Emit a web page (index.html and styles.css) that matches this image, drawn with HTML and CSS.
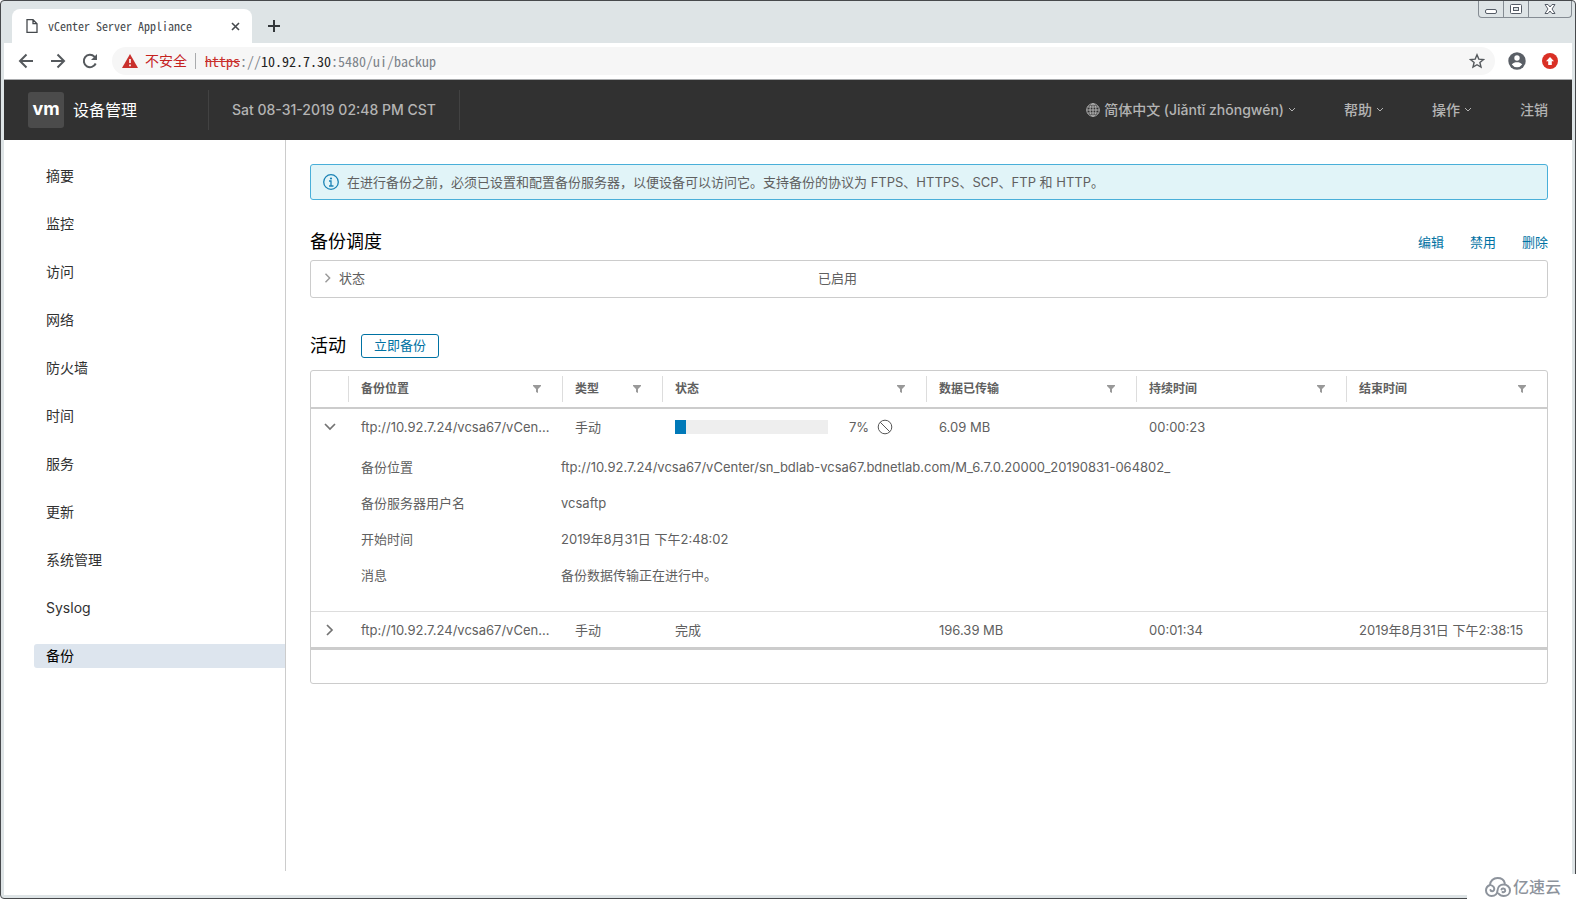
FILE: index.html
```html
<!DOCTYPE html>
<html lang="zh-CN">
<head>
<meta charset="utf-8">
<title>vCenter Server Appliance</title>
<link rel="stylesheet" href="styles.css">
</head>
<body>
<svg class="defs" aria-hidden="true">
  <symbol id="funnel" viewBox="0 0 8 8"><path d="M0 0h8v1L5 4v4L3 7V4L0 1z" fill="#999"/></symbol>
  <symbol id="down" viewBox="0 0 12 12"><path d="M1 3l5 5 5-5" fill="none" stroke="currentColor" stroke-width="1.700"/></symbol>
  <symbol id="right" viewBox="0 0 12 12"><path d="M3 1l5 5-5 5" fill="none" stroke="currentColor" stroke-width="1.700"/></symbol>
  <symbol id="caret" viewBox="0 0 8 8"><path d="M1 2l3 3 3-3" fill="none" stroke="currentColor"/></symbol>
</svg>
<div class="window">
  <div class="tabstrip">
    <div class="tab">
      <svg class="tab-icon" viewBox="0 0 12 14"><path d="M1 .7h6l4 4v8.600H1zM7 .7v4h4" fill="none" stroke="#45494d" stroke-width="1.300"/></svg>
      <span class="tab-title">vCenter Server Appliance</span>
      <button class="plain" aria-label="关闭标签页"><svg class="s9" viewBox="0 0 9 9"><path d="M1 1l7 7M8 1L1 8" stroke="#45494d" stroke-width="1.600"/></svg></button>
    </div>
    <button class="plain new-tab" aria-label="新标签页"><svg class="s12" viewBox="0 0 12 12"><path d="M6 0v12M0 6h12" stroke="#33373a" stroke-width="2"/></svg></button>
    <div class="controls">
      <button class="control" aria-label="最小化"><svg class="s14" viewBox="0 0 14 14"><rect x="1.500" y="7.500" width="11" height="4" rx="1.500" fill="#fff" stroke="#555c66"/></svg></button>
      <button class="control" aria-label="还原"><svg class="s14" viewBox="0 0 14 14"><rect x="1.500" y="2.500" width="11" height="9" rx="1" fill="#fff" stroke="#555c66"/><rect x="4.500" y="5.500" width="5" height="3" fill="#dee4e6" stroke="#555c66"/></svg></button>
      <button class="control close" aria-label="关闭"><svg class="s14" viewBox="0 0 14 14"><path d="M2 2.500h3l2 2.500 2-2.500h3L9 7l3 4.500H9L7 9l-2 2.500H2L5 7z" fill="#fff" stroke="#555c66"/></svg></button>
    </div>
  </div>

  <div class="toolbar">
    <button class="plain" aria-label="后退"><svg class="s16" viewBox="0 0 16 16"><path d="M15 8H2M8.500 1.500L2 8l6.500 6.500" fill="none" stroke="#55595d" stroke-width="2"/></svg></button>
    <button class="plain" aria-label="前进"><svg class="s16" viewBox="0 0 16 16"><path d="M1 8h13M7.500 1.500L14 8l-6.500 6.500" fill="none" stroke="#55595d" stroke-width="2"/></svg></button>
    <button class="plain" aria-label="重新加载"><svg class="s16" viewBox="0 0 16 16"><path d="M13.700 10.500A6.200 6.200 0 1 1 12.400 3.600L14 5.200" fill="none" stroke="#55595d" stroke-width="2"/><path d="M15 1v6H9z" fill="#55595d"/></svg></button>
    <div class="omnibox">
      <svg class="warn" viewBox="0 0 16 14"><path d="M8 0l8 14H0z" fill="#c9302c"/><path d="M8 5v4M8 10.500v1.800" stroke="#fff" stroke-width="1.600"/></svg>
      <span class="insecure">不安全</span>
      <div class="url" role="textbox" contenteditable="true" spellcheck="false" aria-label="地址"><s class="scheme">https</s>://<span class="host">10.92.7.30</span>:5480/ui/backup</div>
      <button class="plain" aria-label="收藏"><svg class="s16" viewBox="0 0 16 16"><path d="M8 1.800l1.800 4.300 4.700.4-3.600 3 1.100 4.600L8 11.700l-4 2.400 1.100-4.600-3.600-3 4.700-.4z" fill="none" stroke="#55595d" stroke-width="1.400"/></svg></button>
    </div>
    <button class="plain" aria-label="用户"><svg class="s18" viewBox="0 0 18 18"><circle cx="9" cy="9" r="8.700" fill="#5a5f66"/><circle cx="9" cy="6" r="2.700" fill="#fff"/><path d="M3.800 12.600C5 10.700 7 10.300 9 10.300s4 .4 5.200 2.300A6.300 6.300 0 0 1 9 15.300a6.300 6.300 0 0 1-5.200-2.700z" fill="#fff"/></svg></button>
    <button class="plain" aria-label="更新浏览器"><svg class="s16" viewBox="0 0 16 16"><circle cx="8" cy="8" r="8" fill="#d93025"/><path d="M8 4l4 4.300H9.800V12H6.200V8.300H4z" fill="#fff"/></svg></button>
  </div>

  <header class="header">
    <div class="brand"><span class="logo">vm</span><span class="product">设备管理</span></div>
    <div class="clock">Sat 08-31-2019 02:48 PM CST</div>
    <nav class="menu">
      <button class="menu-item"><svg class="s14" viewBox="0 0 14 14"><g fill="none" stroke="currentColor"><circle cx="7" cy="7" r="6.300"/><ellipse cx="7" cy="7" rx="3" ry="6.300"/><path d="M7 1v12M1 7h12M1.800 4h10.400M1.800 10h10.400"/></g></svg><span>简体中文 (Jiǎntǐ zhōngwén)</span><svg class="s8"><use href="#caret"/></svg></button>
      <button class="menu-item"><span>帮助</span><svg class="s8"><use href="#caret"/></svg></button>
      <button class="menu-item"><span>操作</span><svg class="s8"><use href="#caret"/></svg></button>
      <button class="menu-item"><span>注销</span></button>
    </nav>
  </header>

  <div class="body">
    <nav class="sidebar">
      <a class="nav-link" href="#">摘要</a>
      <a class="nav-link" href="#">监控</a>
      <a class="nav-link" href="#">访问</a>
      <a class="nav-link" href="#">网络</a>
      <a class="nav-link" href="#">防火墙</a>
      <a class="nav-link" href="#">时间</a>
      <a class="nav-link" href="#">服务</a>
      <a class="nav-link" href="#">更新</a>
      <a class="nav-link" href="#">系统管理</a>
      <a class="nav-link" href="#">Syslog</a>
      <a class="nav-link active" href="#" aria-current="page">备份</a>
    </nav>

    <main class="main">
      <div class="alert">
        <svg class="s16" viewBox="0 0 16 16"><circle cx="8" cy="8" r="7.300" fill="none" stroke="#1b83b5" stroke-width="1.300"/><circle cx="8" cy="4.500" r="1.100" fill="#1b83b5"/><path d="M6 7h2v5M6 12h4.500" fill="none" stroke="#1b83b5" stroke-width="1.300"/></svg>
        <span>在进行备份之前，必须已设置和配置备份服务器，以便设备可以访问它。支持备份的协议为 FTPS、HTTPS、SCP、FTP 和 HTTP。</span>
      </div>

      <div class="section-head">
        <h2>备份调度</h2>
        <div class="actions"><a href="#">编辑</a><a href="#">禁用</a><a href="#">删除</a></div>
      </div>
      <div class="status-box">
        <button class="plain status-key"><svg class="s10"><use href="#right"/></svg>状态</button>
        <span>已启用</span>
      </div>

      <div class="section-head activity">
        <h2>活动</h2>
        <button class="backup-now">立即备份</button>
      </div>
      <table class="grid">
        <colgroup><col class="c-exp"><col class="c-loc"><col class="c-type"><col class="c-state"><col class="c-num"><col class="c-num"><col></colgroup>
        <thead>
          <tr>
            <th></th>
            <th><div class="th">备份位置<button class="plain" aria-label="筛选备份位置"><svg class="s8"><use href="#funnel"/></svg></button></div></th>
            <th><div class="th">类型<button class="plain" aria-label="筛选类型"><svg class="s8"><use href="#funnel"/></svg></button></div></th>
            <th><div class="th">状态<button class="plain" aria-label="筛选状态"><svg class="s8"><use href="#funnel"/></svg></button></div></th>
            <th><div class="th">数据已传输<button class="plain" aria-label="筛选数据已传输"><svg class="s8"><use href="#funnel"/></svg></button></div></th>
            <th><div class="th">持续时间<button class="plain" aria-label="筛选持续时间"><svg class="s8"><use href="#funnel"/></svg></button></div></th>
            <th><div class="th">结束时间<button class="plain" aria-label="筛选结束时间"><svg class="s8"><use href="#funnel"/></svg></button></div></th>
          </tr>
        </thead>
        <tbody>
          <tr>
            <td class="exp"><button class="plain" aria-label="折叠"><svg class="s12"><use href="#down"/></svg></button></td>
            <td>ftp://10.92.7.24/vcsa67/vCen...</td>
            <td>手动</td>
            <td><div class="progress"><div class="track"><div class="fill" style="width:7%"></div></div><span>7%</span><button class="plain" aria-label="取消"><svg class="s16" viewBox="0 0 16 16"><g fill="none" stroke="#565656"><circle cx="8" cy="8" r="6.800"/><path d="M3.200 3.200l9.600 9.600"/></g></svg></button></div></td>
            <td>6.09 MB</td>
            <td>00:00:23</td>
            <td></td>
          </tr>
          <tr>
            <td></td>
            <td colspan="6" class="detail">
              <dl>
                <dt>备份位置</dt><dd>ftp://10.92.7.24/vcsa67/vCenter/sn_bdlab-vcsa67.bdnetlab.com/M_6.7.0.20000_20190831-064802_</dd>
                <dt>备份服务器用户名</dt><dd>vcsaftp</dd>
                <dt>开始时间</dt><dd>2019年8月31日 下午2:48:02</dd>
                <dt>消息</dt><dd>备份数据传输正在进行中。</dd>
              </dl>
            </td>
          </tr>
          <tr class="next">
            <td class="exp"><button class="plain" aria-label="展开"><svg class="s12"><use href="#right"/></svg></button></td>
            <td>ftp://10.92.7.24/vcsa67/vCen...</td>
            <td>手动</td>
            <td>完成</td>
            <td>196.39 MB</td>
            <td>00:01:34</td>
            <td>2019年8月31日 下午2:38:15</td>
          </tr>
        </tbody>
        <tfoot><tr><td colspan="7"></td></tr></tfoot>
      </table>
    </main>
  </div>
</div>
<div class="watermark">
  <svg class="cloud" viewBox="0 0 26 20"><g fill="none" stroke="#8d939c" stroke-width="2" stroke-linecap="round"><path d="M5 8C5 4 8.500 1 12.500 1c3.500 0 6.500 2 7.300 5.200"/><path d="M5 8C2.500 9 1 11 1 13.500 1 16.500 3.500 19 6.500 19c3.500 0 5.800-2.300 6-5.500.3-3.800 3-6 6-6 3.600 0 6.500 2.600 6.500 6S22 19 18.700 19c-2.400 0-4-.8-5.200-2.500"/><path d="M5.500 13c.2 1.500 2.800 1.800 3.500.2.900-2-.5-4.200-2.500-4.800"/><path d="M16.500 12.500c.3-1.400 3.500-1.300 3.700.8.200 1.600-1.500 2.300-2.700 1.700"/></g></svg>
  <span>亿速云</span>
</div>
</body>
</html>
```

FILE: styles.css
```css
* { box-sizing: border-box; }

body {
  margin: 0;
  background: #fff;
  color: #606060;
  font-family: Inter, "Noto Sans CJK SC", sans-serif;
  font-size: 13px;
  font-weight: 400;
  line-height: 24px;
}

button { font: inherit; color: inherit; }
a { text-decoration: none; }
svg { display: block; flex: none; }
h2, dl, dd { margin: 0; }

.defs { position: absolute; width: 0; height: 0; }
.s8 { width: 8px; height: 8px; }
.s9 { width: 9px; height: 9px; }
.s10 { width: 10px; height: 10px; }
.s12 { width: 12px; height: 12px; }
.s14 { width: 14px; height: 14px; }
.s16 { width: 16px; height: 16px; }
.s18 { width: 18px; height: 18px; }

.plain {
  display: flex;
  align-items: center;
  padding: 0;
  border: 0;
  background: none;
}

/* Browser window */
.window {
  display: flex;
  flex-direction: column;
  min-height: 100vh;
  padding: 0 3px 3px;
  border: 1px solid #47494c;
  border-radius: 4px;
  background: #dee4e6;
}

.tabstrip {
  display: flex;
  align-items: center;
  height: 42px;
  padding-left: 8px;
}
.tab {
  display: flex;
  align-items: center;
  align-self: flex-end;
  width: 240px;
  height: 34px;
  padding: 0 12px 0 14px;
  border-radius: 8px 8px 0 0;
  background: #fff;
}
.tab-icon { width: 12px; height: 14px; }
.tab-title {
  flex: 1;
  margin-left: 10px;
  color: #45494d;
  font-family: "Noto Sans Mono CJK SC", "Liberation Mono", monospace;
  font-size: 12px;
}
.new-tab { margin: 8px 0 0 16px; }
.controls {
  display: flex;
  align-self: flex-start;
  height: 17px;
  margin-left: auto;
  border: 1px solid #858c93;
  border-top: 0;
  border-radius: 0 0 4px 4px;
}
.control {
  display: flex;
  align-items: center;
  justify-content: center;
  width: 25px;
  padding: 0;
  border: 0;
  border-right: 1px solid #858c93;
  background: none;
}
.control.close { width: 42px; border: 0; }

.toolbar {
  display: flex;
  align-items: center;
  gap: 16px;
  height: 37px;
  padding: 0 14px;
  border-bottom: 1px solid #a9abad;
  background: #fff;
}
.omnibox {
  display: flex;
  flex: 1;
  align-items: center;
  height: 28px;
  margin: 0 -3px 0 -2px;
  padding: 0 10px;
  border-radius: 14px;
  background: #f6f6f6;
}
.warn { width: 16px; height: 14px; }
.insecure {
  margin: 0 8px 0 7px;
  color: #c5221f;
  font-size: 14px;
}
.url {
  flex: 1;
  padding-left: 9px;
  border-left: 1px solid #a9abad;
  color: #7d838a;
  font-family: "Noto Sans Mono CJK SC", "Liberation Mono", monospace;
  font-size: 14px;
  line-height: 16px;
}
.scheme { color: #c9302c; }
.host { color: #222; }

/* Application header */
.header {
  display: flex;
  align-items: center;
  height: 60px;
  padding: 0 24px;
  background: #313131;
  color: #b4b4b4;
  font-size: 14px;
  font-weight: 500;
}
.brand {
  display: flex;
  align-items: center;
  gap: 9px;
  width: 180px;
}
.logo {
  width: 36px;
  height: 36px;
  border-radius: 3px;
  background: #4b4b4b;
  color: #fff;
  font-size: 18px;
  font-weight: 700;
  line-height: 34px;
  text-align: center;
}
.product { color: #fff; font-size: 16px; font-weight: 400; }
.clock {
  padding: 0 23px;
  border: solid #424242;
  border-width: 0 1px;
  line-height: 40px;
}
.menu { display: flex; gap: 48px; margin-left: auto; }
.menu-item {
  display: flex;
  align-items: center;
  gap: 4px;
  padding: 0;
  border: 0;
  background: none;
}

/* Page body */
.body {
  display: flex;
  flex: 1;
  padding-bottom: 24px;
  background: #fff;
}
.sidebar {
  display: flex;
  flex: none;
  flex-direction: column;
  gap: 24px;
  width: 282px;
  padding: 24px 0 0 30px;
  border-right: 1px solid #ccc;
}
.nav-link {
  padding-left: 12px;
  border-radius: 3px 0 0 3px;
  color: #313131;
  font-size: 14px;
}
.nav-link.active { background: #dde5ee; color: #000; }

.main { flex: 1; min-width: 0; padding: 24px; }
.alert {
  display: flex;
  align-items: center;
  gap: 8px;
  padding: 5px 12px;
  border: 1px solid #49afd9;
  border-radius: 3px;
  background: #e1f4f8;
}
.section-head {
  display: flex;
  align-items: center;
  justify-content: space-between;
  height: 36px;
  margin-top: 24px;
}
.section-head h2 {
  color: #000;
  font-size: 18px;
  font-weight: 400;
}
.actions { display: flex; gap: 26px; }
.actions a { color: #0072a3; }
.status-box {
  display: grid;
  grid-template-columns: 495px 1fr;
  align-items: center;
  height: 38px;
  padding: 0 12px 2px;
  border: 1px solid #ccc;
  border-radius: 3px;
}
.status-key { gap: 6px; }
.status-key svg { color: #999; }
.section-head.activity {
  justify-content: flex-start;
  gap: 15px;
  height: 24px;
  margin: 36px 0 12px;
}
.backup-now {
  height: 24px;
  padding: 0 12px 2px;
  border: 1px solid #0072a3;
  border-radius: 3px;
  background: #fff;
  color: #0072a3;
  line-height: 20px;
}

/* Activity grid */
.grid {
  width: 100%;
  border: 1px solid #ccc;
  border-radius: 3px;
  border-spacing: 0;
  table-layout: fixed;
}
.c-exp { width: 37px; }
.c-loc { width: 214px; }
.c-type { width: 100px; }
.c-state { width: 264px; }
.c-num { width: 210px; }
.grid th {
  height: 38px;
  padding: 0;
  border-bottom: 2px solid #ccc;
  text-align: left;
}
.th {
  display: flex;
  align-items: center;
  justify-content: space-between;
  height: 26px;
  padding: 0 21px 0 12px;
  border-left: 1px solid #ddd;
  font-size: 12px;
  font-weight: 600;
}
.grid td {
  height: 36px;
  padding: 0 12px 0 13px;
  white-space: nowrap;
}
.exp svg { color: #737373; }
.progress { display: flex; align-items: center; }
.track {
  width: 153px;
  height: 14px;
  margin-right: 21px;
  background: #eee;
}
.fill { height: 14px; background: #0079b8; }
.progress .plain { margin-left: 8px; }
.grid .detail { padding: 4px 12px 18px 13px; }
.detail dl {
  display: grid;
  grid-template-columns: 200px 1fr;
  line-height: 36px;
}
.detail dt, .detail dd { height: 36px; }
.grid .next td { border-top: 1px solid #ddd; }
.grid tfoot td { border-top: 3px solid #ccc; }

/* Site mark over the lower right corner */
.watermark {
  position: absolute;
  right: 0;
  bottom: 0;
  display: flex;
  align-items: center;
  gap: 2px;
  height: 25px;
  padding: 0 15px 0 18px;
  background: #fff;
  color: #8d939c;
  font-size: 16px;
  font-weight: 500;
}
.cloud { width: 26px; height: 20px; }
```
